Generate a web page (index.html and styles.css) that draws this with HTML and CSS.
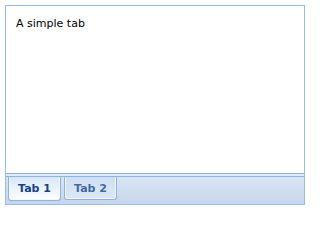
FILE: index.html
```html
<!DOCTYPE html>
<html>
<head>
<meta charset="utf-8">
<link rel="stylesheet" href="styles.css">
</head>
<body>
<div class="panel">
  <div class="body">A simple tab</div>
  <div class="footer">
    <div class="strip">
      <div class="tab active"><span class="tab-inner">Tab 1</span></div>
      <div class="tab"><span class="tab-inner">Tab 2</span></div>
    </div>
  </div>
</div>
</body>
</html>
```
FILE: styles.css
```css
html, body { margin: 0; padding: 0; background: #fff; }
body { font-family: "DejaVu Sans", Tahoma, sans-serif; }
.panel {
  margin: 5px;
  width: 298px;
  height: 198px;
  border: 1px solid #99bbe8;
  display: flex;
  flex-direction: column;
}
.body {
  flex: 1;
  padding: 11px 10px;
  font-size: 11px;
  color: #000;
  background: #fff;
}
.footer {
  border-top: 1px solid #8db2e3;
  background: #deecfd;
  padding-top: 2px;
}
.strip {
  border-top: 1px solid #8db2e3;
  height: 27px;
  background: linear-gradient(#d9e5f4, #c6d6ec);
  display: flex;
  gap: 3px;
  padding-left: 2px;
  align-items: flex-start;
}
.tab {
  width: 51px;
  height: 22px;
  border: 1px solid #8db2e3;
  border-top: none;
  border-radius: 0 0 3px 3px;
  background: linear-gradient(#cfdff3, #dce8f7);
  box-shadow: inset 1px 0 0 #f0f6fd, inset -1px 0 0 #f0f6fd, inset 0 -1px 0 #f0f6fd;
  display: flex;
  align-items: center;
  justify-content: center;
  font: bold 11px "DejaVu Sans", Tahoma, sans-serif;
  color: #416aa3;
}
.tab.active {
  height: 23px;
  background: linear-gradient(#d7e6f8, #ffffff);
  color: #15428b;
}
```
